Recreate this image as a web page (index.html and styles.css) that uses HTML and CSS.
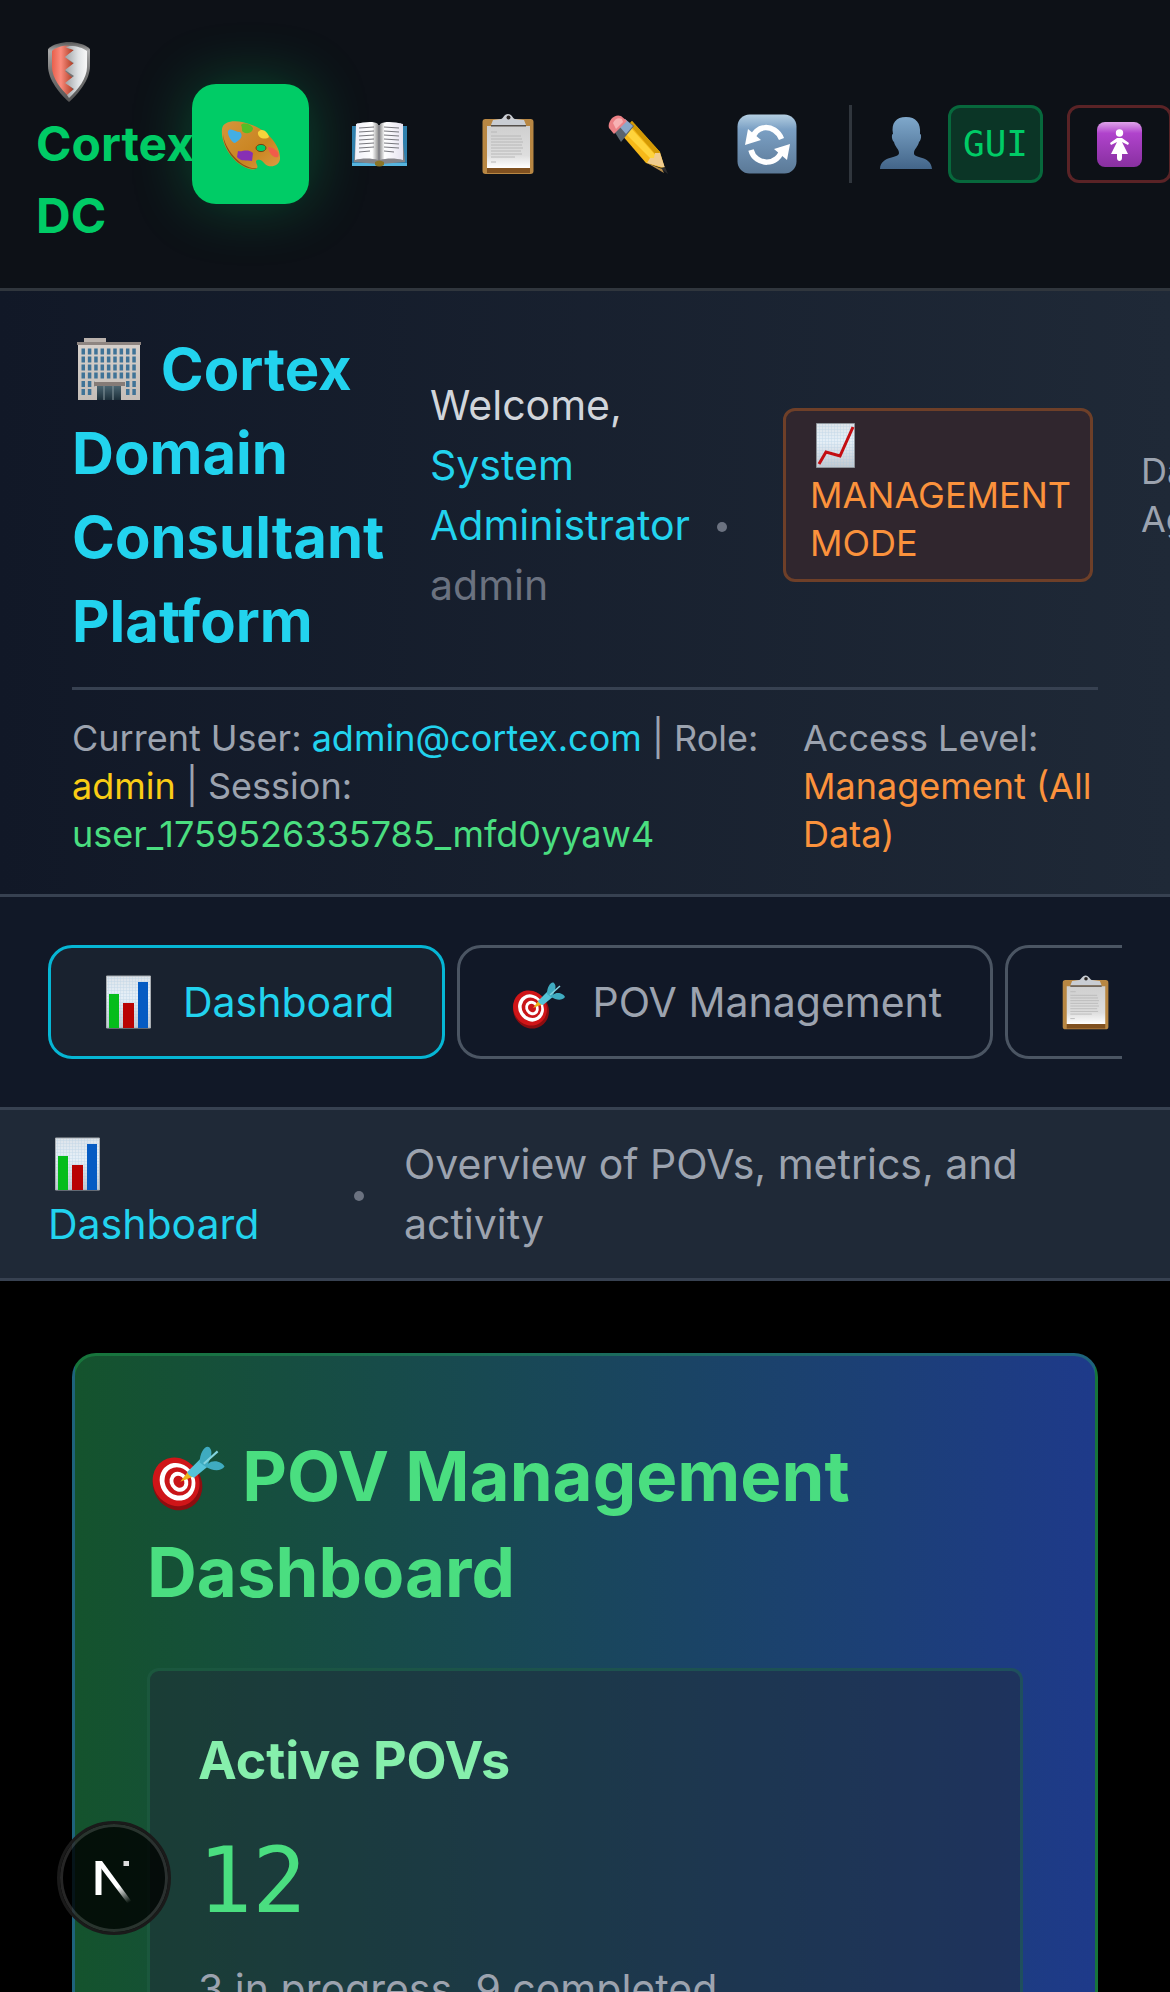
FILE: index.html
```html
<!DOCTYPE html>
<html lang="en">
<head>
<meta charset="utf-8">
<meta name="viewport" content="width=device-width, initial-scale=1">
<title>Cortex DC</title>
<link rel="stylesheet" href="styles.css">
</head>
<body>
<svg class="sprite" aria-hidden="true">
  <defs>
    <linearGradient id="steel" x1="0" y1="0" x2="0" y2="1"><stop offset="0" stop-color="#555"/><stop offset=".15" stop-color="#aaa"/><stop offset=".5" stop-color="#777"/><stop offset="1" stop-color="#555"/></linearGradient>
    <linearGradient id="shieldRed" x1="0" y1="0" x2="1" y2="0"><stop offset="0" stop-color="#e8604c"/><stop offset=".4" stop-color="#fb8b7c"/><stop offset="1" stop-color="#a83820"/></linearGradient>
    <linearGradient id="shieldWhite" x1="0" y1="0" x2="1" y2="0"><stop offset="0" stop-color="#9ea2a5"/><stop offset=".6" stop-color="#dfe2e4"/><stop offset="1" stop-color="#f8f8f8"/></linearGradient>
    <linearGradient id="wood" x1="0" y1="0" x2="1" y2="1"><stop offset="0" stop-color="#d5953c"/><stop offset=".6" stop-color="#c98420"/><stop offset="1" stop-color="#dc9c45"/></linearGradient>
    <linearGradient id="pageL" x1="0" y1="0" x2="1" y2="0"><stop offset="0" stop-color="#f0f0f8"/><stop offset=".75" stop-color="#fff"/><stop offset="1" stop-color="#999"/></linearGradient>
    <linearGradient id="pageR" x1="0" y1="0" x2="1" y2="0"><stop offset="0" stop-color="#999"/><stop offset=".2" stop-color="#fff"/><stop offset="1" stop-color="#e6e3f0"/></linearGradient>
    <linearGradient id="sheet" x1="0" y1="0" x2="0" y2="1"><stop offset="0" stop-color="#cfcfcf"/><stop offset=".7" stop-color="#dedede"/><stop offset="1" stop-color="#fff"/></linearGradient>
    <linearGradient id="blueTile" x1="0" y1="0" x2="0" y2="1"><stop offset="0" stop-color="#b4cfe2"/><stop offset=".25" stop-color="#7ba0c4"/><stop offset="1" stop-color="#5b7997"/></linearGradient>
    <linearGradient id="purpleTile" x1="0" y1="0" x2="0" y2="1"><stop offset="0" stop-color="#dfa4ea"/><stop offset=".25" stop-color="#b043cc"/><stop offset="1" stop-color="#8830a0"/></linearGradient>
    <linearGradient id="bust" x1="0" y1="0" x2="0" y2="1"><stop offset="0" stop-color="#7fa8cb"/><stop offset="1" stop-color="#436589"/></linearGradient>
    <linearGradient id="paper" x1="0" y1="0" x2="0" y2="1"><stop offset="0" stop-color="#dde3e9"/><stop offset=".4" stop-color="#e6f0f8"/><stop offset="1" stop-color="#c2c8cf"/></linearGradient>
    <linearGradient id="stone" x1="0" y1="0" x2="0" y2="1"><stop offset="0" stop-color="#d6d0cb"/><stop offset="1" stop-color="#c5beb8"/></linearGradient>
    <linearGradient id="door" x1="0" y1="0" x2="0" y2="1"><stop offset="0" stop-color="#4a6470"/><stop offset="1" stop-color="#1d2f3a"/></linearGradient>
    <linearGradient id="fade" gradientUnits="userSpaceOnUse" x1="36" y1="38" x2="46" y2="54"><stop offset="0" stop-color="#fff"/><stop offset="1" stop-color="#fff" stop-opacity="0"/></linearGradient>
    <pattern id="grid" width="3" height="3" patternUnits="userSpaceOnUse"><path d="M0 .5h3M.5 0v3" stroke="#a9c6e0" stroke-width=".5" opacity=".5"/></pattern>

    <g id="shield">
      <path d="M33 0C26 0 17 2 12 7v17c0 14 12 28 21 36 9-8 21-22 21-36V7C49 2 40 0 33 0z" fill="url(#steel)"/>
      <path d="M34 4c-6-1-14 1-18 5v16c0 11 9 22 17 30l5-6-5-7 5-5-9-8 9-7-9-7 9-7-7-2z" fill="url(#shieldRed)"/>
      <path d="M34 4c7 0 13 2 17 5v16c0 11-9 23-18 31l-2-3 1-1 6-5-9-6 9-7-9-6 9-7-9-6 9-7-9-3z" fill="url(#shieldWhite)"/>
    </g>
    <g id="palette">
      <path d="M1 15C2 6 17 5 31 11c17 6 29 22 28 34-1 8-11 9-15 5-3-4-5-5-8-4-3 2 2 6 0 8-4 4-17-1-25-11C4 35 0 24 1 15z" fill="url(#wood)"/>
      <path d="M2 20c1 14 18 36 34 34l-2 1C18 55 2 36 2 20z" fill="#875218"/>
      <ellipse cx="40" cy="34" rx="5" ry="3.600" fill="#00cc66" stroke="#704313"/>
      <path d="M20 11c3-3 10-1 12 3 0 4-5 7-10 4-2-2 0-3-2-7z" fill="#54be26"/>
      <path d="M7 17c3-4 7 1 12 1 4 4 0 8-5 11-3 0-8-8-7-12z" fill="#43aee4"/>
      <path d="M37 18c4-5 10 0 11 5-3 3-12 2-11-5z" fill="#f5d33c"/>
      <path d="M17 37c5 1 9-3 15 2l-1 8c-6-1-11 1-15-4z" fill="#872fb4"/>
      <path d="M47 33c5 0 13 5 10 10-6 2-10-7-10-10z" fill="#f15b4a"/>
    </g>
    <g id="book">
      <path d="M2 12h55v40H2z" fill="#3080ad"/><path d="M2 49h55v3H2z" fill="#56b5df"/>
      <path d="M4 48L7 9l22 2 22-2 4 39-24 2h-3z" fill="#85858a"/>
      <path d="M6 10c8-2 18-3 22 0v36c-6-2-17-2-23 0z" fill="url(#pageL)"/>
      <path d="M30 10c5-3 15-2 23 0v36c-7-2-17-2-23 0z" fill="url(#pageR)"/>
      <path d="M9 14l15-1M9 18l15-1M9 22l15-1M9 26l15-1M9 30l15-1M9 34l15-1M9 38l11-1M34 13l15 1M34 17l15 1M34 21l15 1M34 25l15 1M34 29l15 1M34 33l15 1M34 37l10 1" stroke="#77777d"/>
      <path d="M25 48q4-3 9 0v3q-5 3-9 0z" fill="#8b7528"/>
    </g>
    <g id="clipboard">
      <rect x="3.500" y="5" width="51" height="55" rx="3" fill="#b88743"/><path d="M8 54h43v5H8z" fill="#805120"/>
      <path d="M8 12h43v42H8z" fill="url(#sheet)"/>
      <path d="M12 18h6M12 22h30M12 25h31M12 28h32M12 31h31M12 34h32M12 37h30M12 40h31M12 43h24M12 48h5" stroke="#b8b8b8"/>
      <path d="M14 6l8-1c2 0 3-5 7-5s5 5 7 5l9 1 2 5H12z" fill="#c9cdd3"/><path d="M12 11h35v1.500H12z" fill="#55504c"/>
      <circle cx="29.500" cy="3.500" r="2" fill="#2a2523"/>
    </g>
    <g id="pencil">
      <path d="M13 20l11-13 28 31 5 17-19-6z" fill="#f6b919"/><path d="M17 19l5-6 28 31-5 3z" fill="#ffd43c"/><path d="M21 10l3-3 28 31-3 4z" fill="#d39a05"/>
      <path d="M39 49l3-5h4l1-5 5 0 5 15z" fill="#f0cc8e"/><path d="M52 54l5-1 3 7z" fill="#2c2c2e"/><path d="M39 49l15 6 2 4z" fill="#b88e4c"/>
      <path d="M6 17L17 5l9 7-13 16z" fill="#58636e"/><path d="M11 12l6-7 8 7-7 8z" fill="#8ba7c8"/>
      <path d="M1 14C-1 8 6-1 13 2l6 5L6 20z" fill="#ec8186"/><path d="M5 9c2-4 5-6 9-4l1 3-7 7z" fill="#f7b2b4"/>
    </g>
    <g id="refresh">
      <rect x=".5" y=".5" width="59" height="59" rx="12" fill="url(#blueTile)"/>
      <path d="M15 27C17 10 38 9 44.500 25M45.500 34C42 53 18 52 14 36" fill="none" stroke="#fff" stroke-width="5.500"/>
      <path d="M11 15l-3 16 16-5zM53 30l-3 16-13-11z" fill="#fff"/>
    </g>
    <g id="person"><path d="M30 3c10 0 15 6 14 17 2 0 1 7-1 8-1 5-5 7-5 11-1 6 17 2 18 16H4c1-14 19-10 19-16 0-4-4-6-5-11-2-1-3-8-1-8C15 9 20 3 30 3z" fill="url(#bust)"/></g>
    <g id="women">
      <rect width="45" height="45" rx="8" fill="url(#purpleTile)"/><circle cx="22.500" cy="11" r="3.700" fill="#fff"/>
      <path d="M20 16h5l7 5-1 2-6-3 6 12h-6v4c0 4-5 4-5 0v-4h-6l6-12-6 3-1-2z" fill="#fff"/>
    </g>
    <g id="building">
      <path d="M12 0h22v5H12z" fill="#b9b1ac"/><path d="M6 7h62v55H6z" fill="url(#stone)"/><path d="M5 4h64v3H5z" fill="#8e8581"/>
      <g stroke="#3f7397" stroke-width="6" stroke-dasharray="3.500 2.850"><path d="M9.500 13.500h56M9.500 21.500h56M9.500 29.500h56M9.500 37.500h56"/><path d="M9.500 46h13M54 46h10M9.500 54h10M54 54h10"/></g>
      <path d="M22 44h31v4H22z" fill="#847b77"/><path d="M25 48h24v14H25z" fill="url(#door)"/><path d="M32 48v14M41 48v14" stroke="#8a9aa0"/>
    </g>
    <g id="chart-up"><path d="M.5.500h38v44H.5z" fill="url(#paper)" stroke="#8d949b"/><path d="M1 1h37v43H1z" fill="url(#grid)"/><path d="M3 41l7-12 14 4L37 4" fill="none" stroke="#c30d12" stroke-width="3"/></g>
    <g id="bars"><path d="M7.500 4h44v52h-44z" fill="url(#paper)" stroke="#a7acb1"/><path d="M8 4h43v52H8z" fill="url(#grid)"/><path d="M10 22h10v34H10z" fill="#05bd1b"/><path d="M24 31h11v25H24z" fill="#b90202"/><path d="M39 10h10v46H39z" fill="#055bc3"/></g>
    <g id="dart">
      <ellipse cx="23" cy="38" rx="17.500" ry="19" transform="rotate(-32 23 38)" fill="#8d0d10"/>
      <ellipse cx="22" cy="36" rx="16.500" ry="18" transform="rotate(-32 22 36)" fill="#cf1518"/>
      <ellipse cx="23" cy="36" rx="12.500" ry="14" transform="rotate(-32 23 36)" fill="#fff"/>
      <ellipse cx="23.500" cy="36" rx="9.500" ry="10.500" transform="rotate(-32 23 36)" fill="#c91518"/>
      <ellipse cx="24" cy="36" rx="6.500" ry="7.500" transform="rotate(-32 24 36)" fill="#fff"/>
      <ellipse cx="24" cy="36" rx="3.800" ry="4.500" transform="rotate(-32 24 36)" fill="#c91518"/>
      <path d="M25 36l6-8 4 4z" fill="#edb319"/><path d="M30 29l10-10 6 5-11 9q-4-1-5-4z" fill="#55c3d8"/>
      <path d="M39 22c0-7 4-13 7-11 3 3 1 8-1 12 4-4 11-1 12 2-3 4-9 3-14 0z" fill="#3fabc0"/><path d="M42 23L52 14" stroke="#83d3df" stroke-width="1.500"/>
    </g>
  </defs>
</svg>

<div class="app">
  <header class="topbar">
    <div class="brand"><svg class="icon" viewBox="0 0 60 60" aria-hidden="true"><use href="#shield"/></svg>Cortex<br>DC</div>
    <nav class="tools" aria-label="Tools">
      <button class="tool tool-active" aria-label="Theme"><svg class="icon" viewBox="0 0 60 60"><use href="#palette"/></svg></button>
      <button class="tool" aria-label="Guide"><svg class="icon" viewBox="0 0 60 60"><use href="#book"/></svg></button>
      <button class="tool" aria-label="Clipboard"><svg class="icon" viewBox="0 0 60 60"><use href="#clipboard"/></svg></button>
      <button class="tool" aria-label="Edit"><svg class="icon" viewBox="0 0 60 60"><use href="#pencil"/></svg></button>
      <button class="tool" aria-label="Refresh"><svg class="icon" viewBox="0 0 60 60"><use href="#refresh"/></svg></button>
    </nav>
    <div class="account">
      <svg class="icon" viewBox="0 0 60 60" aria-hidden="true"><use href="#person"/></svg>
      <button class="mode">GUI</button>
      <button class="exit" aria-label="Restroom"><svg class="icon-sm" viewBox="0 0 45 45"><use href="#women"/></svg></button>
    </div>
  </header>

  <section class="hero">
    <div class="hero-main">
      <h1><svg class="icon-title" viewBox="0 0 75 64" aria-hidden="true"><use href="#building"/></svg> Cortex Domain Consultant Platform</h1>
      <p class="welcome">Welcome, <span class="cyan">System Administrator</span> <span class="dot"></span> <span class="muted">admin</span></p>
      <p class="badge"><svg class="icon-sm badge-icon" viewBox="-6 0 45 45" aria-hidden="true"><use href="#chart-up"/></svg><br>MANAGEMENT MODE</p>
      <p class="scope">Data:<br>Aggregated</p>
    </div>
    <div class="hero-info">
      <p>Current User: <span class="cyan">admin@cortex.com</span> | Role: <span class="yellow">admin</span> | Session: <span class="green">user_1759526335785_mfd0yyaw4</span></p>
      <p>Access Level: <span class="orange">Management (All Data)</span></p>
    </div>
  </section>

  <nav class="tabs" aria-label="Sections">
    <div class="tabs-track">
      <button class="tab tab-active"><svg class="icon" viewBox="0 0 60 60" aria-hidden="true"><use href="#bars"/></svg>Dashboard</button>
      <button class="tab"><svg class="icon" viewBox="0 0 60 60" aria-hidden="true"><use href="#dart"/></svg>POV Management</button>
      <button class="tab tab-last" aria-label="Projects"><svg class="icon" viewBox="-4 -4 67 67" aria-hidden="true"><use href="#clipboard"/></svg></button>
    </div>
  </nav>

  <div class="crumbs">
    <p class="crumb-name cyan"><svg class="icon crumb-icon" viewBox="0 0 60 60" aria-hidden="true"><use href="#bars"/></svg><br>Dashboard</p>
    <span class="dot"></span>
    <p>Overview of POVs, metrics, and activity</p>
  </div>

  <main>
    <section class="panel">
      <h2><svg class="icon-heading" viewBox="1 0 57 60" aria-hidden="true"><use href="#dart"/></svg> POV Management Dashboard</h2>
      <article class="stat">
        <h3>Active POVs</h3>
        <p class="stat-value">12</p>
        <p class="stat-note">3 in progress, 9 completed</p>
      </article>
    </section>
  </main>
</div>

<button class="devtools" aria-label="Developer tools">
  <svg viewBox="0 0 60 60" aria-hidden="true"><path d="M14.500 47V13" stroke="#fff" stroke-width="6"/><path d="M11.500 13H18L48 54l-4 2z" fill="url(#fade)"/><path d="M39.500 13H45v5h-5.500z" fill="#ddd"/></svg>
</button>
</body>
</html>
```

FILE: styles.css
```css
* { box-sizing: border-box; margin: 0; }

body {
  background: #000;
  color: #9ca3af;
  font-family: Inter, "Liberation Sans", sans-serif;
  font-size: 41px;
  line-height: 60px;
}

button { font: inherit; color: inherit; background: none; border: 0; padding: 0; cursor: pointer; }
.sprite { position: absolute; width: 0; height: 0; }
.icon { width: 60px; height: 60px; flex: none; display: block; }
.icon-sm { width: 45px; height: 45px; flex: none; display: block; }

.cyan { color: #22d3ee; }
.muted { color: #6b7280; }
.yellow { color: #facc15; }
.green { color: #4ade80; }
.orange { color: #fb923c; }
.dot {
  display: inline-block;
  flex: none;
  width: 10px;
  height: 10px;
  border-radius: 50%;
  background: #6b7280;
}

.app { height: 100vh; overflow: hidden; display: flex; flex-direction: column; }
.app > * { flex: none; }

.topbar {
  display: flex;
  align-items: center;
  padding: 36px 0 36px 36px;
  background: #0d1117;
  border-bottom: 3px solid #30363d;
}
.brand { width: 156px; flex: none; color: #00cc66; font-size: 48px; font-weight: 700; line-height: 72px; }
.brand .icon { margin: 6px 0; }
.tools { display: flex; gap: 12px; }
.tool { display: flex; align-items: center; justify-content: center; width: 117px; height: 120px; border-radius: 24px; }
.tool-active { background: #00cc66; box-shadow: 0 0 60px rgba(0, 204, 102, .3); }
.account {
  display: flex;
  align-items: center;
  margin-left: 24px;
  padding-left: 24px;
  border-left: 3px solid #30363d;
  font-size: 36px;
  line-height: 48px;
}
.mode, .exit { height: 78px; border: 3px solid; border-radius: 12px; flex: none; }
.mode {
  margin: 0 24px 0 12px;
  padding: 0 12px;
  background: #0b3526;
  border-color: #07683c;
  color: #00cc66;
  font-family: "DejaVu Sans Mono", monospace;
}
.exit { padding: 0 27px; border-color: #5a2326; }

.hero { padding: 36px 72px; background: linear-gradient(to right, #111827, #1f2937); border-bottom: 3px solid #374151; }
.hero-main { display: flex; align-items: center; gap: 48px; padding-bottom: 24px; border-bottom: 3px solid #374151; }
.hero-main > * { flex: none; }
h1 { width: 310px; color: #22d3ee; font-size: 58px; line-height: 84px; font-weight: 700; }
.icon-title { width: 75px; height: 64px; vertical-align: -12px; }
.welcome { width: 305px; color: #d1d5db; }
.welcome .dot { margin: 0 0 8px 16px; }
.badge {
  width: 310px;
  padding: 12px 24px;
  border: 3px solid #6e3f28;
  border-radius: 12px;
  background: #30262e;
  color: #fb923c;
  font-size: 36px;
  line-height: 48px;
}
.badge-icon { display: inline-block; vertical-align: top; }
.scope { font-size: 36px; line-height: 48px; }
.hero-info { display: grid; grid-template-columns: 1fr 295px; gap: 36px; padding-top: 24px; font-size: 36px; line-height: 48px; }

.tabs { padding: 48px; background: #111827; border-bottom: 3px solid #374151; }
.tabs-track { display: flex; gap: 12px; overflow: hidden; }
.tab {
  display: flex;
  align-items: center;
  gap: 24px;
  flex: none;
  height: 114px;
  padding: 0 48px;
  border: 3px solid #4b5563;
  border-radius: 24px;
  white-space: nowrap;
}
.tab-active { border-color: #06b6d4; background: #19222f; color: #22d3ee; }
.tab-last { width: 320px; }

.crumbs { display: flex; align-items: center; padding: 24px 48px; background: #1f2937; border-bottom: 3px solid #374151; }
.crumb-name { flex: 0 0 306px; }
.crumb-icon { display: inline-block; vertical-align: top; }
.crumbs .dot { margin: 4px 40px 0 0; }

main { padding: 72px; }
.panel {
  padding: 72px;
  border: 3px solid rgba(34, 197, 94, .3);
  border-radius: 24px;
  background: linear-gradient(to right, #14532d, #1e3a8a);
}
h2 { margin-bottom: 48px; color: #4ade80; font-size: 69px; line-height: 96px; font-weight: 700; }
.icon-heading { width: 79px; height: 83px; vertical-align: -14px; }
.stat { padding: 48px; border: 3px solid rgba(34, 197, 94, .2); border-radius: 12px; background: rgba(31, 41, 55, .5); }
h3 { margin-bottom: 24px; color: #86efac; font-size: 52px; line-height: 84px; font-weight: 700; }
.stat-value { margin-bottom: 24px; color: #4ade80; font-family: "DejaVu Sans Mono", monospace; font-size: 90px; line-height: 108px; }

.devtools {
  position: fixed;
  left: 57px;
  bottom: 57px;
  width: 114px;
  height: 114px;
  display: flex;
  align-items: center;
  justify-content: center;
  border: 3px solid #1a1a1a;
  border-radius: 50%;
  background: rgba(0, 0, 0, .8);
  box-shadow: inset 0 0 0 3px rgba(255, 255, 255, .15);
}
.devtools svg { width: 60px; height: 60px; }
```
